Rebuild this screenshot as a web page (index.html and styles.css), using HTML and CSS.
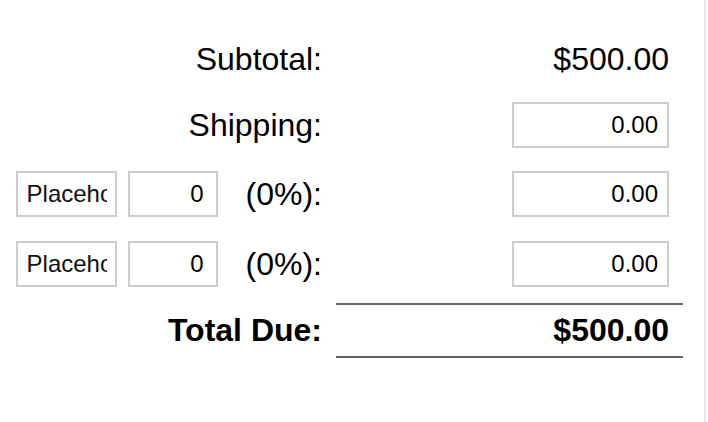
FILE: index.html
```html
<!DOCTYPE html>
<html lang="en">
<head>
<meta charset="utf-8">
<title>Totals</title>
<link rel="stylesheet" href="styles.css">
</head>
<body>
<div class="page">
  <div class="rows">
    <div class="row row-text">
      <div class="label">Subtotal:</div>
      <div class="value">$500.00</div>
    </div>
    <div class="row row-input">
      <div class="label">Shipping:</div>
      <div class="value"><input class="field amount" type="text" value="0.00"></div>
    </div>
    <div class="row row-input">
      <div class="label">
        <input class="field tax-name" type="text" placeholder="Placeholder">
        <input class="field tax-rate" type="text" value="0">
        <span class="pct">(0%):</span>
      </div>
      <div class="value"><input class="field amount" type="text" value="0.00"></div>
    </div>
    <div class="row row-input">
      <div class="label">
        <input class="field tax-name" type="text" placeholder="Placeholder">
        <input class="field tax-rate" type="text" value="0">
        <span class="pct">(0%):</span>
      </div>
      <div class="value"><input class="field amount" type="text" value="0.00"></div>
    </div>
  </div>
  <div class="row total-row">
    <div class="label total-label">Total Due:</div>
    <div class="value total-value">$500.00</div>
  </div>
</div>
</body>
</html>
```

FILE: styles.css
```css
html, body {
  margin: 0;
  padding: 0;
  background: #fff;
}

body {
  font-family: "Liberation Sans", Arial, Helvetica, sans-serif;
  color: #000;
}

.page {
  width: 706px;
  height: 422px;
  box-sizing: border-box;
  border-right: 2px solid #e8e8e8;
  padding-top: 40px;
}

.rows {
  display: flex;
  flex-direction: column;
  gap: 23.5px;
}

.row {
  display: grid;
  grid-template-columns: 336px 347px;
  align-items: center;
  font-size: 32px;
}

.row-text {
  height: 38px;
  line-height: 38px;
}

.row-input {
  height: 46px;
  line-height: 46px;
}

.label {
  display: flex;
  justify-content: flex-end;
  align-items: center;
  padding-right: 14px;
  white-space: nowrap;
}

.value {
  display: flex;
  justify-content: flex-end;
  align-items: center;
  padding-right: 14px;
  white-space: nowrap;
}

.field {
  box-sizing: border-box;
  height: 46px;
  margin: 0;
  border: 2px solid #cdcdcd;
  border-radius: 0;
  background: #fff;
  font-family: "Liberation Sans", Arial, Helvetica, sans-serif;
  font-size: 24px;
  color: #000;
  outline: none;
}

.field::placeholder {
  color: #111;
  opacity: 1;
}

.amount {
  width: 157px;
  padding: 0 9px 0 8px;
  text-align: right;
}

.tax-name {
  width: 101px;
  padding: 0 8px 0 9px;
  text-align: left;
}

.tax-rate {
  width: 90px;
  margin-left: 11px;
  padding: 0 12px 0 8px;
  text-align: right;
}

.pct {
  margin-left: 28px;
}

.total-row {
  margin-top: 16px;
  font-weight: bold;
}

.total-value {
  height: 55px;
  box-sizing: border-box;
  line-height: 51px;
  border-top: 2px solid #666;
  border-bottom: 2px solid #666;
}
```
